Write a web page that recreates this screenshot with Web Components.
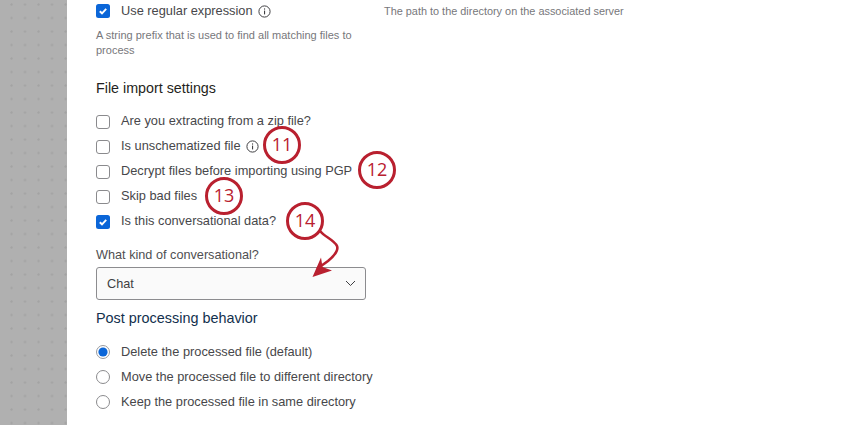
<!DOCTYPE html>
<html>
<head>
<meta charset="utf-8">
<style>
  html,body{margin:0;padding:0;height:425px;overflow:hidden;background:#fff}
  body{font-family:"Liberation Sans",Arial,sans-serif;color:#3a3a3c}
</style>
</head>
<body>
<x-page>
  <x-row-check checked style="height:22px">Use regular expression<x-info slot="after"></x-info></x-row-check>
  <x-help slot="left">A string prefix that is used to find all matching files to process</x-help>
  <x-side slot="right">The path to the directory on the associated server</x-side>
  <x-head>File import settings</x-head>
  <x-row-check>Are you extracting from a zip file?</x-row-check>
  <x-row-check>Is unschematized file<x-info slot="after"></x-info></x-row-check>
  <x-row-check>Decrypt files before importing using PGP</x-row-check>
  <x-row-check>Skip bad files</x-row-check>
  <x-row-check checked>Is this conversational data?</x-row-check>
  <x-select label="What kind of conversational?" value="Chat"></x-select>
  <x-head dark>Post processing behavior</x-head>
  <x-row-radio checked>Delete the processed file (default)</x-row-radio>
  <x-row-radio>Move the processed file to different directory</x-row-radio>
  <x-row-radio>Keep the processed file in same directory</x-row-radio>
  <x-badge n="11" style="left:263px;top:126px"></x-badge>
  <x-badge n="12" style="left:358px;top:151px"></x-badge>
  <x-badge n="13" style="left:205px;top:177px"></x-badge>
  <x-badge n="14" style="left:286px;top:202px"></x-badge>
  <x-arrow style="left:305px;top:230px"></x-arrow>
</x-page>
<script>
const def = (name, html, init) => {
  customElements.define(name, class extends HTMLElement {
    constructor(){
      super();
      this.attachShadow({mode:"open"}).innerHTML = html;
      if (init) init(this);
    }
  });
};

const CHECK = `<svg width="14" height="14" viewBox="0 0 14 14"><rect width="14" height="14" rx="2.5" fill="#0b66d8"/><path d="M3.8 7.2l2.2 2.1 4.2-4.4" fill="none" stroke="#fff" stroke-width="1.9"/></svg>`;
const UNCHECK = `<svg width="14" height="14" viewBox="0 0 14 14"><rect x=".5" y=".5" width="13" height="13" rx="2.5" fill="#fff" stroke="#8a8a8d"/></svg>`;
const RADIO_ON = `<svg width="14" height="14" viewBox="0 0 14 14"><circle cx="7" cy="7" r="6.5" fill="#fff" stroke="#9a9a9d"/><circle cx="7" cy="7" r="4.6" fill="#0b66d8"/></svg>`;
const RADIO_OFF = `<svg width="14" height="14" viewBox="0 0 14 14"><circle cx="7" cy="7" r="6.5" fill="#fff" stroke="#8a8a8d"/></svg>`;

def("x-page", `<style>
  :host{display:flex;height:425px;width:850px;overflow:hidden;position:relative}
  .rail{width:67px;flex:none;background-color:#b0b0b0;
    background-image:radial-gradient(circle at 1.5px 1.5px,#a3a3a3 .8px,transparent 1.5px);
    background-size:13.5px 13.5px;background-position:10px 3px}
  main{flex:1;padding-left:29px;display:flex;flex-direction:column}
  .top{display:flex}
  .left{width:288px;flex:none}
</style>
<div class="rail"></div>
<main>
  <div class="top">
    <div class="left"><slot name="first"></slot><slot name="left"></slot></div>
    <div class="right"><slot name="right"></slot></div>
  </div>
  <slot></slot>
</main>`, el => {
  el.firstElementChild.slot = "first";
});

def("x-row-check", `<style>
  :host{display:flex;align-items:center;height:25px;font-size:12.8px;color:#47474a;flex:none}
  .box{width:14px;height:14px;margin-right:11px;display:flex}
  .txt{margin-top:-2px}
  ::slotted(x-info){margin-left:5px}
</style><span class="box"></span><span class="txt"><slot></slot></span><slot name="after"></slot>`, el => {
  queueMicrotask(() => {
    el.shadowRoot.querySelector(".box").innerHTML = el.hasAttribute("checked") ? CHECK : UNCHECK;
  });
});

def("x-row-radio", `<style>
  :host{display:flex;align-items:center;height:25px;font-size:12.8px;color:#47474a;flex:none}
  .box{width:14px;height:14px;margin-right:11px;display:flex}
</style><span class="box"></span><span><slot></slot></span>`, el => {
  queueMicrotask(() => {
    el.shadowRoot.querySelector(".box").innerHTML = el.hasAttribute("checked") ? RADIO_ON : RADIO_OFF;
  });
});

def("x-info", `<style>
  :host{display:inline-flex;align-items:center}
</style><svg width="13" height="13" viewBox="0 0 13 13"><circle cx="6.5" cy="6.5" r="5.6" fill="none" stroke="#3f3f42" stroke-width="1"/><rect x="6" y="5.6" width="1.1" height="3.8" fill="#3f3f42"/><rect x="6" y="3.4" width="1.1" height="1.2" fill="#3f3f42"/></svg>`);

def("x-help", `<style>
  :host{display:block;font-size:11px;line-height:15px;color:#77777b;padding-top:6px;width:270px}
</style><slot></slot>`);

def("x-side", `<style>
  :host{display:block;font-size:10.9px;line-height:22px;color:#77777b}
</style><slot></slot>`);

def("x-head", `<style>
  :host{display:block;font-size:14.3px;line-height:20px;color:#1f1f21;padding:20px 0 11px;flex:none}
  :host([dark]){color:#12304d;font-size:14.4px;padding:8px 0 11px}
</style><slot></slot>`);

def("x-select", `<style>
  :host{display:block;flex:none;font-size:12.7px;color:#4f4f52;padding-top:13px}
  .lab{line-height:16px;margin-bottom:4px}
  .sel{box-sizing:border-box;width:270px;height:33px;border:1px solid #8c8c8f;border-radius:3px;background:#fafafa;
    display:flex;align-items:center;justify-content:space-between;padding:0 9px 0 10px;color:#3f3f42}
</style><div class="lab"></div><div class="sel"><span class="val"></span>
<svg width="11" height="7" viewBox="0 0 11 7"><path d="M1 1l4.5 4.5L10 1" fill="none" stroke="#3f3f42" stroke-width="1"/></svg></div>`, el => {
  queueMicrotask(() => {
    el.shadowRoot.querySelector(".lab").textContent = el.getAttribute("label");
    el.shadowRoot.querySelector(".val").textContent = el.getAttribute("value");
  });
});

// numbered callouts sit over the form
def("x-badge", `<style>
  :host{position:absolute;box-sizing:border-box;width:38px;height:38px;border:3px solid #b9202f;border-radius:50%;background:#fff;
    color:#b9202f;font:18px/31px "Open Sans","Liberation Sans",sans-serif;text-align:center}
</style><span class="n"></span>`, el => {
  queueMicrotask(() => { el.shadowRoot.querySelector(".n").textContent = el.getAttribute("n"); });
});

def("x-arrow", `<style>
  :host{position:absolute;width:40px;height:50px;display:block}
</style><svg width="40" height="50" viewBox="0 0 40 50"><path d="M15 1C20 7 29 10 32 16C34 21 29 26 23 31C19 34 16 36 13 38" fill="none" stroke="#b9202f" stroke-width="2.6" stroke-linecap="round"/><path d="M7.5 47L16 27.500L17.500 37L27 40.500Z" fill="#b9202f"/></svg>`);
</script>
</body>
</html>
